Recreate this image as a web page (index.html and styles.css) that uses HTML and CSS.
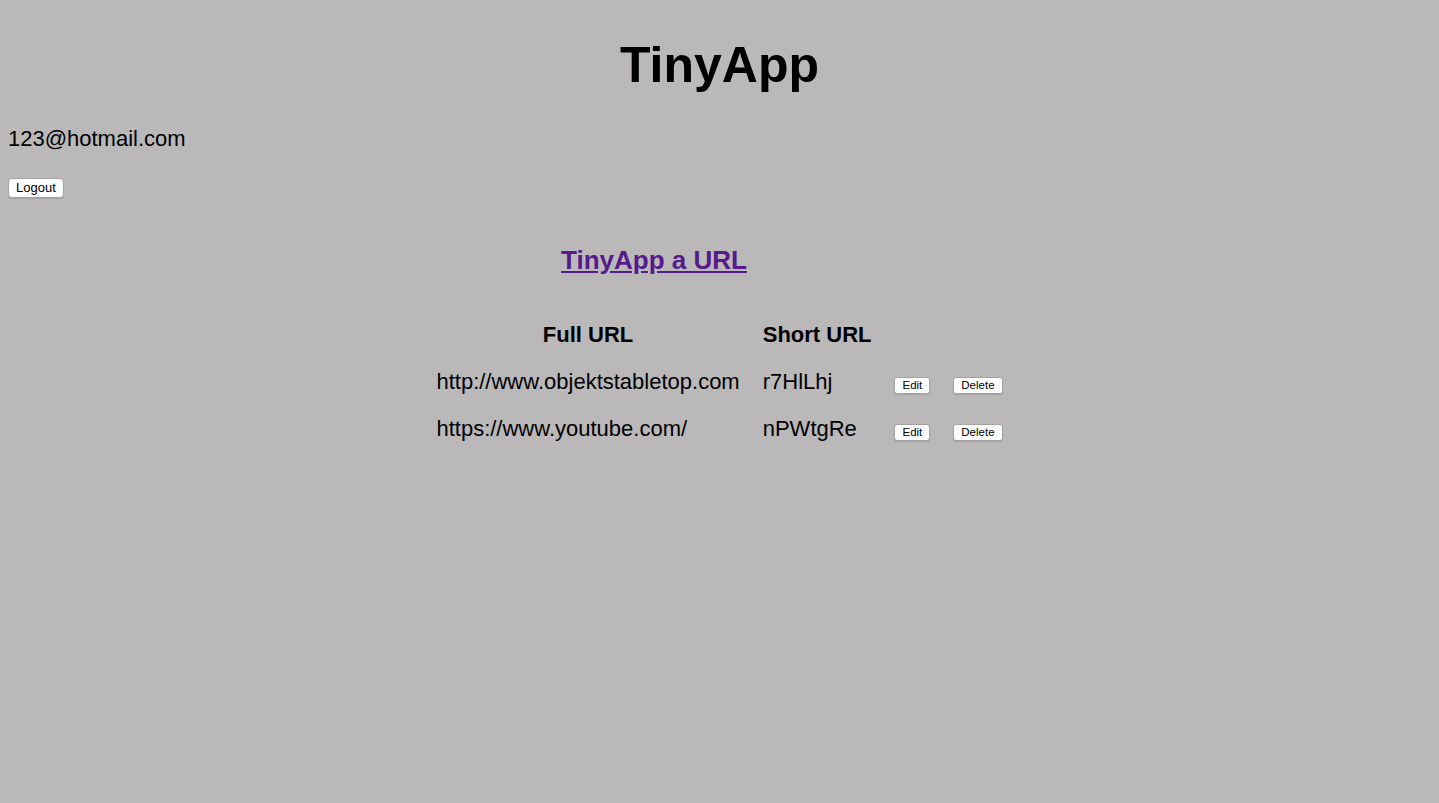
FILE: index.html
```html
<!DOCTYPE html>
<html lang="en">
<head>
<meta charset="utf-8">
<title>TinyApp</title>
<link rel="stylesheet" href="styles.css">
</head>
<body>
  <h1 class="title">TinyApp</h1>
  <p class="user">123@hotmail.com</p>
  <form class="logout-form">
    <button type="button" class="btn">Logout</button>
  </form>
  <table class="urls">
    <tr>
      <td class="link-cell" colspan="2"><a class="new-link" href="#">TinyApp a URL</a></td>
    </tr>
    <tr>
      <th>Full URL</th>
      <th>Short URL</th>
    </tr>
    <tr>
      <td>http://www.objektstabletop.com</td>
      <td>r7HlLhj</td>
      <td><button type="button" class="btn btn-sm">Edit</button></td>
      <td><button type="button" class="btn btn-sm">Delete</button></td>
    </tr>
    <tr>
      <td>https://www.youtube.com/</td>
      <td>nPWtgRe</td>
      <td><button type="button" class="btn btn-sm">Edit</button></td>
      <td><button type="button" class="btn btn-sm">Delete</button></td>
    </tr>
  </table>
</body>
</html>
```
FILE: styles.css
```css
html, body {
  background: #bab8b9;
}
body {
  margin: 0;
  padding: 0 8px;
  font-family: "Liberation Sans", Arial, Helvetica, sans-serif;
  color: #000;
}
.title {
  margin: 36px 0 0;
  font-size: 50px;
  line-height: 58px;
  font-weight: bold;
  text-align: center;
}
.user {
  margin: 32px 0 0;
  font-size: 22px;
  line-height: 25px;
}
.logout-form {
  display: flex;
  margin: 27px 0 0;
}
.btn {
  font-family: "Liberation Sans", Arial, Helvetica, sans-serif;
  font-size: 13px;
  line-height: 16px;
  padding: 1px 7px;
  border: 1px solid #a3a3a3;
  border-radius: 4px;
  background: #fff;
  color: #000;
  box-shadow: 0 1px 1px rgba(0,0,0,0.12);
}
.btn-sm {
  font-size: 11.5px;
  line-height: 13px;
  padding: 1px 7px;
  border-radius: 3px;
}
.urls {
  margin: 35px auto 0;
  border-collapse: separate;
  border-spacing: 3px 2px;
  font-size: 22px;
  line-height: 25px;
}
.urls td, .urls th {
  padding: 10px;
  vertical-align: baseline;
}
.urls th {
  font-weight: bold;
  text-align: center;
}
.link-cell {
  text-align: center;
  padding-bottom: 35px !important;
}
.new-link {
  font-size: 26px;
  line-height: 30px;
  font-weight: bold;
  color: #551a8b;
  text-decoration: underline;
}
```
